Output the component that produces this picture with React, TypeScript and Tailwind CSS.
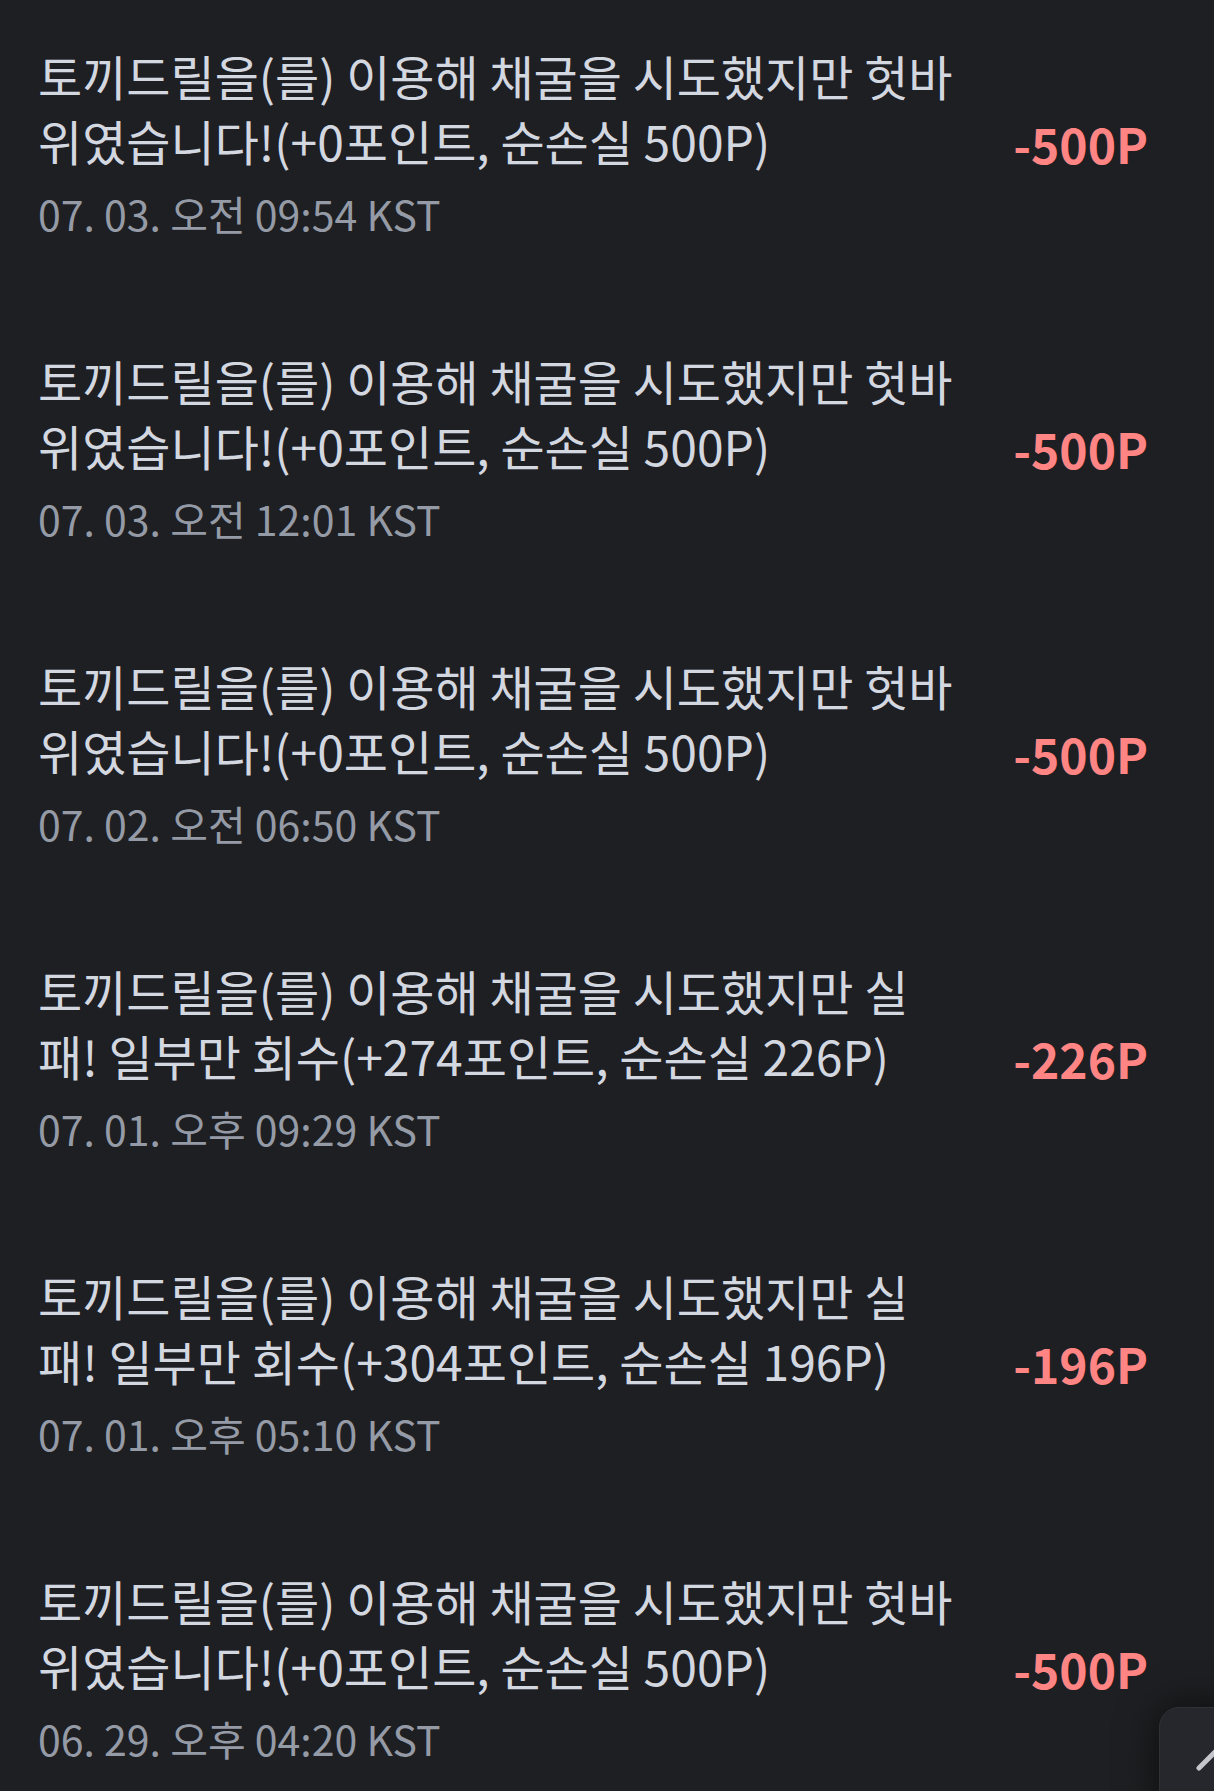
import React from "react";

type Item = { text: string; date: string; amount: string };

const A = "토끼드릴을(를) 이용해 채굴을 시도했지만 헛바위였습니다!(+0포인트, 순손실 500P)";

const items: Item[] = [
  { text: A, date: "07. 03. 오전 09:54 KST", amount: "-500P" },
  { text: A, date: "07. 03. 오전 12:01 KST", amount: "-500P" },
  { text: A, date: "07. 02. 오전 06:50 KST", amount: "-500P" },
  {
    text: "토끼드릴을(를) 이용해 채굴을 시도했지만 실패! 일부만 회수(+274포인트, 순손실 226P)",
    date: "07. 01. 오후 09:29 KST",
    amount: "-226P",
  },
  {
    text: "토끼드릴을(를) 이용해 채굴을 시도했지만 실패! 일부만 회수(+304포인트, 순손실 196P)",
    date: "07. 01. 오후 05:10 KST",
    amount: "-196P",
  },
  { text: A, date: "06. 29. 오후 04:20 KST", amount: "-500P" },
];

export default function App() {
  return (
    <div
      className="relative w-[1214px] h-[1791px] overflow-hidden bg-[#1e1f22]"
      style={{ fontFamily: '"Noto Sans CJK KR", "Noto Sans", sans-serif' }}
    >
      <div className="flex flex-col pt-[40px]">
        {items.map((it, i) => (
          <div key={i} className="flex items-center justify-between pl-[38px] pr-[66px] h-[305px] pb-[99px]">
            <div className="w-[920px]">
              <p className="text-[48px] leading-[65px] text-[#d3d7e0]">{it.text}</p>
              <p className="text-[41px] leading-[62px] mt-[9px] text-[#959ba6]">{it.date}</p>
            </div>
            <div className="text-[48px] font-bold text-[#ff8585] leading-none">{it.amount}</div>
          </div>
        ))}
      </div>
      <div className="absolute left-[1159px] top-[1707px] w-[110px] h-[110px] rounded-[20px] bg-[#26272c] border border-[#303137] shadow-[0_0_40px_rgba(0,0,0,0.6)]">
        <svg className="absolute left-[34px] top-[36px]" width="40" height="40" viewBox="0 0 40 40">
          <line x1="5" y1="24" x2="26" y2="3" stroke="#c4c6cc" strokeWidth="5" strokeLinecap="round" />
        </svg>
      </div>
    </div>
  );
}
